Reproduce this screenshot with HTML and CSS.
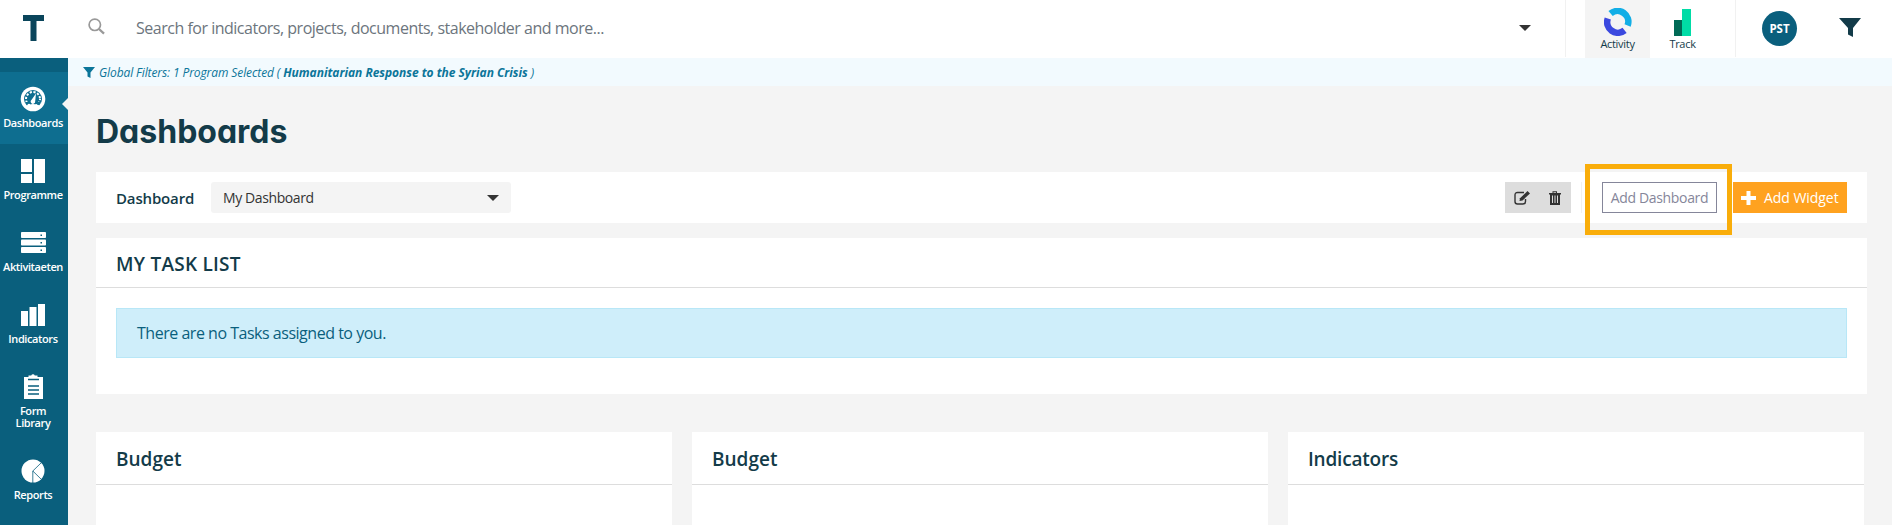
FILE: index.html
```html
<!DOCTYPE html>
<html lang="en">
<head>
<meta charset="utf-8">
<title>Dashboards</title>
<link rel="stylesheet" href="styles.css">
</head>
<body>
<header class="topbar">
  <div class="logo"><svg width="21" height="26" viewBox="0 0 21 26"><path d="M0 0h21v6h-7.5v20h-6V6H0z" fill="#0a455b"/></svg></div>
  <svg class="search-icon" width="17" height="17" viewBox="0 0 17 17" fill="none" stroke="#999"><circle cx="6.8" cy="6.8" r="5.7" stroke-width="1.7"/><path d="M11 11l5 4.7" stroke-width="2.3"/></svg>
  <span class="search-text">Search for indicators, projects, documents, stakeholder and more...</span>
  <svg class="search-caret" width="12" height="6" viewBox="0 0 12 6"><path d="M0 0h12L6 6z" fill="#333"/></svg>
  <nav class="apps">
    <a class="app app-on"><svg width="28" height="28" viewBox="0 0 28 28" fill="none" stroke-width="6.6"><path d="M6.6 5.6A10.7 10.7 0 0 1 23.6 17.5" stroke="#12aee6"/><path d="M3.8 10.5A10.7 10.7 0 0 0 20.6 22.4" stroke="#3b49df"/></svg><span class="app-name">Activity</span></a>
    <a class="app"><svg width="18" height="28" viewBox="0 0 18 28"><path d="M0 12h9v16H0z" fill="#006a56"/><path d="M8 1h9v27H8z" fill="#00dca6"/></svg><span class="app-name">Track</span></a>
  </nav>
  <div class="avatar">PST</div>
  <svg class="funnel" width="22" height="19" viewBox="0 0 22 19"><path d="M0 0h22l-8 10v9l-5-2.6V10z" fill="#133b49"/></svg>
</header>
<div class="shell">
  <aside class="side">
    <a class="item item-on"><svg width="26" height="26" viewBox="0 0 26 26"><circle cx="13" cy="13" r="12.3" fill="#fff"/><circle cx="13" cy="13" r="9" fill="#0e6e90"/><circle cx="13" cy="13" r="7" fill="none" stroke="#fff" stroke-width="2" stroke-dasharray="2.2 1.6" stroke-dashoffset="1"/><path d="M6 16h14v2.500q-7-2.500-14 0z" fill="#0e6e90"/><path d="M6 19.500q7-3 14 0a9 9 0 0 1-14 0z" fill="#fff"/><path d="M16 7.500l-.8 7.700a2.300 2.300 0 1 1-3.600-1.500z" fill="#fff"/></svg><span class="label">Dashboards</span></a>
    <a class="item"><svg width="26" height="26" viewBox="0 0 26 26" fill="#fff"><path d="M1 1h11v13H1zM1 16h11v9H1zM14 1h11v24H14z"/></svg><span class="label">Programme</span></a>
    <a class="item"><svg width="26" height="26" viewBox="0 0 26 26" fill="#fff"><rect x="1" y="2" width="25" height="6" rx=".8"/><rect x="1" y="9.500" width="25" height="6" rx=".8"/><rect x="1" y="17" width="25" height="6" rx=".8"/><path d="M20.500 4.500h1.500v1.500h-1.500zM20.500 12h1.500v1.500h-1.500zM20.500 19.500h1.500v1.500h-1.500z" fill="#0a5f7d"/></svg><span class="label">Aktivitaeten</span></a>
    <a class="item"><svg width="26" height="26" viewBox="0 0 26 26" fill="#fff"><path d="M1 9h7v15H1zM9.500 5h7v19h-7zM18 2h7v22h-7z"/></svg><span class="label">Indicators</span></a>
    <a class="item item-tall"><svg width="26" height="26" viewBox="0 0 26 26"><path d="M4 3h4.500V1.500h2.700a2 2 0 0 1 3.600 0h2.700V3H23v22H4z" fill="#fff"/><path d="M8 5.500h11M8 12h11M8 16h11M8 20h11" stroke="#0a5f7d" stroke-width="1.400"/></svg><span class="label">Form<br>Library</span></a>
    <a class="item"><svg width="26" height="26" viewBox="0 0 26 26"><circle cx="13" cy="13" r="11.500" fill="#fff"/><path d="M21.500 4.500L12.800 13V25M12.800 13l8.700 8.500" fill="none" stroke="#0a5f7d" stroke-width=".8"/></svg><span class="label">Reports</span></a>
  </aside>
  <main class="main">
    <div class="filters"><svg width="12" height="11" viewBox="0 0 12 11"><path d="M0 0h12L7.500 5.500V11L4.500 9.500v-4z" fill="#0b7599"/></svg><span class="filter-text">Global Filters: 1 Program Selected (</span><b class="filter-name">Humanitarian Response to the Syrian Crisis</b><span>)</span></div>
    <div class="content">
      <h1 class="title">Dashboards</h1>
      <section class="toolbar">
        <span class="tb-label">Dashboard</span>
        <div class="select"><span class="select-text">My Dashboard</span><svg width="12" height="6" viewBox="0 0 12 6"><path d="M0 0h12L6 6z" fill="#333"/></svg></div>
        <div class="tools">
          <svg width="17" height="14" viewBox="0 0 17 14" fill="none" stroke="#333"><path d="M10 1.500H3.500Q1 1.500 1 4v6.500Q1 13 3.500 13H9q2.500 0 2.500-2.500V8" stroke-width="1.400"/><path d="M6 7.300L13.500 0l2.500 2.500-7.500 7-3 .5z" fill="#333" stroke="none"/></svg>
          <svg width="12" height="14" viewBox="0 0 12 14"><path d="M0 2h3.500V.3h4.500V2h4v1.400h-1V14H1V3.400H0z" fill="#333"/><path d="M4.500 1.200h2.500V2H4.500zM3 4.500h1V12H3zM5.500 4.500h1V12h-1zM8 4.500h1V12H8z" fill="#ddd"/></svg>
        </div>
        <div class="add-area"><span class="btn-outline">Add Dashboard</span><div class="highlight"></div></div>
        <div class="btn-solid"><svg width="15" height="14" viewBox="0 0 15 14"><path d="M5.500 0h4v5H15v4H9.500v5h-4V9H0V5h5.500z" fill="#fff"/></svg><span class="solid-text">Add Widget</span></div>
      </section>
      <section class="panel tasks">
        <h2 class="tasks-title">MY TASK LIST</h2>
        <div class="alert">There are no Tasks assigned to you.</div>
      </section>
      <div class="cards">
        <section class="panel"><h2 class="card-title">Budget</h2></section>
        <section class="panel"><h2 class="card-title">Budget</h2></section>
        <section class="panel"><h2 class="card-title card-title-tight">Indicators</h2></section>
      </div>
    </div>
  </main>
</div>
</body>
</html>
```

FILE: styles.css
```css
* { box-sizing: border-box; }
body { margin: 0; height: 525px; overflow: hidden; display: flex; flex-direction: column; background: #f4f4f4; font-family: "Open Sans", "Noto Sans", sans-serif; color: #133b49; white-space: nowrap; }
svg { display: block; flex: none; }
.topbar { height: 58px; flex: none; background: #fff; display: flex; align-items: flex-start; }
.logo { width: 88px; padding: 15px 0 0 23px; }
.search-icon { margin-top: 18px; }
.search-text { margin-left: 31px; flex: 1; font-size: 16px; line-height: 57px; letter-spacing: -.49px; color: #6c757d; }
.search-caret { margin: 25px 34px 0 0; }
.apps { display: flex; width: 171px; height: 57px; border-left: 1px solid #f1f1f1; border-right: 1px solid #f1f1f1; padding-left: 19px; }
.app { width: 65px; height: 58px; display: flex; flex-direction: column; align-items: center; padding-top: 8px; }
.app-on { background: #f4f4f4; }
.app svg { height: 28px; }
.app-name { font-size: 11px; line-height: 16px; letter-spacing: -.3px; }
.avatar { width: 35px; height: 35px; margin: 11px 0 0 26px; border-radius: 50%; background: #0a5f7d; color: #fff; font-size: 11.500px; font-weight: 700; line-height: 35px; text-align: center; }
.funnel { margin: 18px 31px 0 42px; }
.shell { flex: 1; display: flex; min-height: 0; }
.side { width: 68px; background: #0a5f7d; padding-top: 14px; color: #fff; }
.item { height: 72px; padding-top: 14px; display: flex; flex-direction: column; align-items: center; position: relative; }
.item svg { margin-right: 2px; }
.item-on { background: #0e6e90; }
.item-on::after { content: ""; position: absolute; right: 0; top: 26px; border: 6px solid transparent; border-left: 0; border-right-color: #f4f4f4; }
.item-tall { height: 84px; }
.label { font-size: 11px; font-weight: 600; letter-spacing: -.4px; line-height: 12px; margin-top: 5px; text-align: center; margin-right: 2px; }
.main { flex: 1; min-width: 0; }
.filters { height: 28px; background: #f2fafe; padding-left: 15px; display: flex; align-items: center; font-size: 12px; font-style: italic; color: #0b7599; }
.filter-text { margin: 0 3px 0 4px; letter-spacing: -.1px; }
.filter-name { margin-right: 3px; letter-spacing: -.03px; }
.content { padding: 0 25px 0 28px; }
.title { margin: 0; height: 86px; font: 700 32px/91px Inter, sans-serif; font-feature-settings: "cv11"; }
.toolbar { height: 51px; background: #fff; display: flex; align-items: center; padding: 0 20px; }
.tb-label { width: 95px; font-size: 15px; font-weight: 600; letter-spacing: -.15px; }
.select { width: 300px; height: 31px; border-radius: 3px; background: #f4f4f4; display: flex; align-items: center; justify-content: space-between; padding: 0 12px; font-size: 14px; color: #333; }
.select-text { letter-spacing: -.4px; }
.tools { width: 66px; height: 31px; margin-left: auto; background: #ddd; display: flex; align-items: center; justify-content: space-between; padding: 0 10px 0 9px; }
.add-area { position: relative; height: 31px; margin: 0 16px 0 10px; padding-left: 20px; border-left: 1px solid #f1f1f1; }
.btn-outline { display: block; width: 115px; height: 31px; border: 1px solid #85869a; color: #85869a; text-align: center; font-size: 14px; line-height: 30px; letter-spacing: -.35px; }
.highlight { position: absolute; left: 3px; top: -18px; width: 147px; height: 71px; border: 5px solid #f9ad0a; }
.btn-solid { width: 114px; height: 31px; background: #ffa21f; color: #fff; display: flex; align-items: center; padding-left: 8px; font-size: 14px; }
.solid-text { margin-left: 8px; letter-spacing: -.05px; }
.panel { background: #fff; }
.tasks { margin-top: 15px; height: 156px; }
.tasks-title { margin: 0; height: 50px; padding-left: 20px; border-bottom: 1px solid #ddd; font-size: 19px; line-height: 52px; font-weight: 600; letter-spacing: .25px; }
.alert { margin: 20px 20px 0; height: 50px; padding-left: 20px; background: #cfeefa; border: 1px solid #b8e7f7; color: #0a5f7d; font-size: 16px; line-height: 49px; letter-spacing: -.48px; }
.cards { display: grid; grid-template-columns: repeat(3, 576px); gap: 20px; margin-top: 38px; }
.cards .panel { height: 93px; }
.card-title { margin: 0; height: 53px; padding-left: 20px; border-bottom: 1px solid #ddd; font-size: 19px; line-height: 54px; font-weight: 600; }
.card-title-tight { letter-spacing: -.2px; }
```
